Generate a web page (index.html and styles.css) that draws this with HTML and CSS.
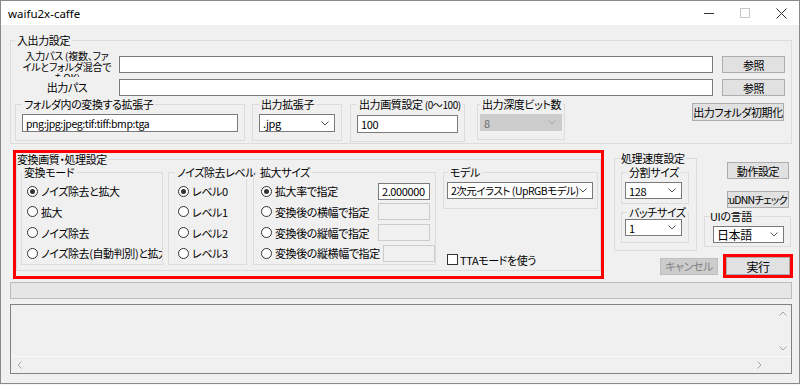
FILE: index.html
```html
<!DOCTYPE html>
<html lang="ja">
<head>
    <meta charset="UTF-8">
    <title>waifu2x-caffe</title>
    <link rel="stylesheet" href="styles.css">
</head>
<body>
<div class="window">

    <!-- タイトルバー -->
    <div class="titlebar">
        <span class="title">waifu2x-caffe</span>
        <div class="caption-btns">
            <div class="cap-btn"><svg width="10" height="10" viewBox="0 0 10 10"><line x1="0" y1="5.5" x2="10" y2="5.5" stroke="#333" stroke-width="1"/></svg></div>
            <div class="cap-btn"><svg width="10" height="10" viewBox="0 0 10 10"><rect x="0.5" y="0.5" width="9" height="9" fill="none" stroke="#c8c8c8" stroke-width="1"/></svg></div>
            <div class="cap-btn"><svg width="11" height="11" viewBox="0 0 11 11"><path d="M0.5 0.5 L10.5 10.5 M10.5 0.5 L0.5 10.5" stroke="#333" stroke-width="1"/></svg></div>
        </div>
    </div>

    <div class="client">

        <!-- 入出力設定 -->
        <fieldset class="group io">
            <legend>入出力設定</legend>
            <div class="path-row first">
                <div class="path-label multi">入力パス (複数、ファ<br>イルとフォルダ混合で<br>もOK)</div>
                <div class="edit path-edit"></div>
                <div class="btn ref-btn">参照</div>
            </div>
            <div class="path-row second">
                <div class="path-label">出力パス</div>
                <div class="edit path-edit"></div>
                <div class="btn ref-btn">参照</div>
            </div>
            <div class="opt-row">
                <fieldset class="group sub ext-group">
                    <legend>フォルダ内の変換する拡張子</legend>
                    <div class="edit ext-edit">png:jpg:jpeg:tif:tiff:bmp:tga</div>
                </fieldset>
                <fieldset class="group sub outext-group">
                    <legend>出力拡張子</legend>
                    <div class="combo outext-combo"><span>.jpg</span><svg width="8" height="5" viewBox="0 0 8 5"><polyline points="0.5,0.5 4,4 7.5,0.5" fill="none" stroke="#555"/></svg></div>
                </fieldset>
                <fieldset class="group sub quality-group">
                    <legend>出力画質設定 <small>(0〜100)</small></legend>
                    <div class="edit quality-edit">100</div>
                </fieldset>
                <fieldset class="group sub depth-group">
                    <legend>出力深度ビット数</legend>
                    <div class="combo disabled depth-combo"><span>8</span><svg width="8" height="5" viewBox="0 0 8 5"><polyline points="0.5,0.5 4,4 7.5,0.5" fill="none" stroke="#a0a0a0"/></svg></div>
                </fieldset>
                <div class="btn reset-btn">出力フォルダ初期化</div>
            </div>
        </fieldset>

        <div class="middle">

            <!-- 変換画質・処理設定 -->
            <div class="mark conv-mark">
                <fieldset class="group conv">
                    <legend>変換画質・処理設定</legend>
                    <div class="conv-row">
                        <fieldset class="group mode-group">
                            <legend>変換モード</legend>
                            <div class="opt"><span class="radio on"></span><span>ノイズ除去と拡大</span></div>
                            <div class="opt"><span class="radio"></span><span>拡大</span></div>
                            <div class="opt"><span class="radio"></span><span>ノイズ除去</span></div>
                            <div class="opt"><span class="radio"></span><span>ノイズ除去(自動判別)と拡大</span></div>
                        </fieldset>
                        <fieldset class="group noise-group">
                            <legend>ノイズ除去レベル</legend>
                            <div class="opt"><span class="radio on"></span><span>レベル0</span></div>
                            <div class="opt"><span class="radio"></span><span>レベル1</span></div>
                            <div class="opt"><span class="radio"></span><span>レベル2</span></div>
                            <div class="opt"><span class="radio"></span><span>レベル3</span></div>
                        </fieldset>
                        <fieldset class="group scale-group">
                            <legend>拡大サイズ</legend>
                            <div class="opt"><span class="radio on"></span><span class="opt-text">拡大率で指定</span><div class="edit scale-edit">2.000000</div></div>
                            <div class="opt"><span class="radio"></span><span class="opt-text">変換後の横幅で指定</span><div class="edit disabled scale-edit"></div></div>
                            <div class="opt"><span class="radio"></span><span class="opt-text">変換後の縦幅で指定</span><div class="edit disabled scale-edit"></div></div>
                            <div class="opt"><span class="radio"></span><span class="opt-text">変換後の縦横幅で指定</span><div class="edit disabled scale-edit"></div></div>
                        </fieldset>
                        <div class="model-col">
                            <fieldset class="group model-group">
                                <legend>モデル</legend>
                                <div class="combo model-combo"><span>2次元イラスト (UpRGBモデル)</span><svg width="8" height="5" viewBox="0 0 8 5"><polyline points="0.5,0.5 4,4 7.5,0.5" fill="none" stroke="#555"/></svg></div>
                            </fieldset>
                            <div class="tta"><span class="check"></span><span>TTAモードを使う</span></div>
                        </div>
                    </div>
                </fieldset>
            </div>

            <!-- 処理速度設定・実行 -->
            <div class="side">
                <div class="side-top">
                    <fieldset class="group speed-group">
                        <legend>処理速度設定</legend>
                        <fieldset class="group sub2 split-group">
                            <legend>分割サイズ</legend>
                            <div class="combo speed-combo"><span>128</span><svg width="8" height="5" viewBox="0 0 8 5"><polyline points="0.5,0.5 4,4 7.5,0.5" fill="none" stroke="#555"/></svg></div>
                        </fieldset>
                        <fieldset class="group sub2 batch-group">
                            <legend>バッチサイズ</legend>
                            <div class="combo speed-combo"><span>1</span><svg width="8" height="5" viewBox="0 0 8 5"><polyline points="0.5,0.5 4,4 7.5,0.5" fill="none" stroke="#555"/></svg></div>
                        </fieldset>
                    </fieldset>
                    <div class="side-right">
                        <div class="btn side-btn first">動作設定</div>
                        <div class="btn side-btn cudnn-btn">cuDNNチェック</div>
                        <fieldset class="group lang-group">
                            <legend>UIの言語</legend>
                            <div class="combo lang-combo"><span>日本語</span><svg width="8" height="5" viewBox="0 0 8 5"><polyline points="0.5,0.5 4,4 7.5,0.5" fill="none" stroke="#555"/></svg></div>
                        </fieldset>
                    </div>
                </div>
                <div class="run-row">
                    <div class="btn disabled cancel-btn">キャンセル</div>
                    <div class="mark run-mark"><div class="btn run-btn">実行</div></div>
                </div>
            </div>
        </div>

        <!-- 進捗・ログ -->
        <div class="progress"></div>
        <div class="log">
            <div class="log-main">
                <div class="log-text"></div>
                <div class="vscroll">
                    <svg width="8" height="5" viewBox="0 0 8 5"><polyline points="0.5,4.5 4,1 7.5,4.5" fill="none" stroke="#a6a6a6"/></svg>
                    <svg width="8" height="5" viewBox="0 0 8 5"><polyline points="0.5,0.5 4,4 7.5,0.5" fill="none" stroke="#a6a6a6"/></svg>
                </div>
            </div>
            <div class="hscroll">
                <div class="hbar">
                    <svg width="5" height="8" viewBox="0 0 5 8"><polyline points="4.5,0.5 1,4 4.5,7.5" fill="none" stroke="#a6a6a6"/></svg>
                    <svg width="5" height="8" viewBox="0 0 5 8"><polyline points="0.5,0.5 4,4 0.5,7.5" fill="none" stroke="#a6a6a6"/></svg>
                </div>
                <div class="corner"></div>
            </div>
        </div>
    </div>
</div>
</body>
</html>
```

FILE: styles.css
```css
* {
    box-sizing: border-box;
}

body {
    margin: 0;
    background-color: #f4f4f4;
    font-family: "Noto Sans CJK JP", sans-serif;
    font-size: 11px;
    font-feature-settings: "palt";
    letter-spacing: -0.4px;
    color: #000;
}

.window {
    width: 800px;
    height: 384px;
    border: 1px solid #8a8a8a;
    background-color: #f0f0f0;
    overflow: hidden;
}

/* タイトルバー */
.titlebar {
    height: 24px;
    background-color: #fff;
    display: flex;
    align-items: center;
    padding-left: 7px;
}

.title {
    font-family: "Noto Sans", sans-serif;
    font-size: 11.5px;
    letter-spacing: 0;
}

.caption-btns {
    margin-left: auto;
    display: flex;
}

.cap-btn {
    width: 36px;
    height: 24px;
    display: flex;
    align-items: center;
    justify-content: center;
}

.client {
    padding: 0 7px 0 9px;
}

/* グループボックス */
.group {
    margin: 0;
    min-width: 0;
    border: 1px solid #dcdcdc;
    padding: 0;
}

.group legend {
    padding: 0 2px;
    line-height: 13px;
    white-space: nowrap;
}

.edit {
    border: 1px solid #7a7a7a;
    background-color: #fff;
    padding-left: 3px;
    display: flex;
    align-items: center;
    white-space: nowrap;
    overflow: hidden;
}

.edit.disabled {
    border-color: #cccccc;
    background-color: #f0f0f0;
}

.combo {
    border: 1px solid #7a7a7a;
    background-color: #fff;
    padding: 0 5px 0 3px;
    display: flex;
    align-items: center;
    white-space: nowrap;
    overflow: hidden;
}

.combo span {
    flex: 1;
    overflow: hidden;
}

.combo svg {
    flex: none;
}

.combo.disabled {
    border-color: #cccccc;
    background-color: #cccccc;
    color: #6d6d6d;
}

.btn {
    border: 1px solid #adadad;
    background-color: #e1e1e1;
    display: flex;
    align-items: center;
    justify-content: center;
    white-space: nowrap;
    overflow: hidden;
}

.btn.disabled {
    border-color: #bfbfbf;
    background-color: #cccccc;
    color: #838383;
}

.mark {
    border: 3px solid #ff0000;
}

/* 入出力設定 */
.io {
    margin-top: 8px;
    padding: 3px 0 1px 4px;
}

.io > legend {
    line-height: 14px;
}

.path-row {
    display: flex;
    align-items: flex-start;
    padding-left: 3px;
}

.path-row.first {
    height: 24px;
}

.path-row.second {
    margin-top: 5px;
    height: 17px;
}

.path-label {
    width: 98px;
    text-align: center;
    line-height: 17px;
    white-space: nowrap;
}

.path-label.multi {
    height: 27px;
    font-size: 10px;
    line-height: 11px;
    overflow: hidden;
    letter-spacing: -0.2px;
}

.path-edit {
    margin-left: 3px;
    width: 594px;
    height: 17px;
}

.first .path-edit, .first .ref-btn {
    margin-top: 6px;
}

.ref-btn {
    margin-left: 9px;
    width: 63px;
    height: 17px;
}

.opt-row {
    display: flex;
    align-items: flex-start;
    margin-top: 1px;
}

.sub {
    padding: 3px 6px 8px 6px;
}

.sub legend {
    line-height: 14px;
}

.sub legend small {
    font-size: 10px;
}

.ext-group {
    width: 230px;
}

.ext-edit {
    height: 18px;
    font-size: 10.5px;
}

.outext-group {
    width: 90px;
    margin-left: 7px;
}

.outext-combo {
    height: 18px;
}

.quality-group {
    width: 115px;
    margin-left: 8px;
}

.quality-edit {
    height: 18px;
}

.depth-group {
    width: 88px;
    margin-left: 12px;
    padding-left: 2px;
    padding-right: 2px;
}

.depth-combo {
    height: 17px;
}

.reset-btn {
    margin-left: auto;
    margin-right: 7px;
    margin-top: 6px;
    width: 92px;
    height: 18px;
}

/* 変換画質・処理設定 */
.middle {
    display: flex;
    align-items: flex-start;
    margin-top: 6px;
}

.conv-mark {
    margin-left: 3px;
    width: 591px;
    padding-bottom: 5px;
}

.conv {
    padding-bottom: 5px;
}

.conv > legend {
    padding: 0 1px 0 0;
}

.conv-row {
    display: flex;
    align-items: flex-start;
    padding-left: 4px;
}

.opt {
    height: 20.67px;
    display: flex;
    align-items: center;
    gap: 3px;
    white-space: nowrap;
    overflow: hidden;
}

.radio {
    flex: none;
    width: 11px;
    height: 11px;
    border: 1px solid #333;
    border-radius: 50%;
    background-color: #fff;
    display: flex;
    align-items: center;
    justify-content: center;
}

.radio.on::after {
    content: "";
    width: 5px;
    height: 5px;
    border-radius: 50%;
    background-color: #333;
}

.mode-group {
    width: 142px;
    padding-top: 2px;
}

.mode-group .opt {
    padding-left: 5px;
}

.noise-group {
    width: 79px;
    margin-left: 5px;
    padding-top: 2px;
    padding-left: 6px;
}

.noise-group .opt {
    padding-left: 3px;
}

.scale-group {
    width: 183px;
    margin-left: 6px;
    padding-top: 2px;
    padding-left: 4px;
}

.scale-group .opt {
    padding-left: 3px;
}

.opt-text {
    flex: 1;
}

.scale-edit {
    flex: none;
    width: 52px;
    height: 17px;
    margin-right: 5px;
}

.model-col {
    width: 155px;
    margin-left: 7px;
}

.model-group {
    padding: 3px 0 9px 3px;
}

.model-group legend {
    margin-left: 1px;
}

.model-combo {
    width: 146px;
    height: 17px;
    font-size: 10.5px;
    letter-spacing: -0.5px;
}

.tta {
    margin-top: 45px;
    height: 11px;
    display: flex;
    align-items: center;
    gap: 2px;
    padding-left: 4px;
}

.check {
    flex: none;
    width: 11px;
    height: 11px;
    border: 1px solid #333;
    background-color: #fff;
}

/* 処理速度設定 */
.side {
    margin-left: 10px;
    width: 178px;
}

.side-top {
    display: flex;
    align-items: flex-start;
}

.speed-group {
    width: 83px;
    margin-top: 2px;
    padding: 0 0 7px 6px;
}

.speed-group > legend {
    padding: 0;
}

.sub2 {
    width: 68px;
    padding: 3px 0 4px 3px;
}

.sub2 legend {
    margin-left: 2px;
}

.split-group {
    margin-top: 1px;
}

.batch-group {
    margin-top: 2px;
    padding-top: 0;
    padding-bottom: 6px;
}

.speed-combo {
    width: 57px;
    height: 17px;
}

.side-right {
    margin-left: 7px;
    width: 88px;
}

.side-btn {
    margin-left: 23px;
    margin-top: 12px;
    width: 62px;
    height: 17px;
}

.cudnn-btn {
    justify-content: flex-end;
    padding-right: 1px;
    font-size: 10.5px;
    letter-spacing: -0.8px;
}

.lang-group {
    margin-top: 2px;
    width: 87px;
    padding: 3px 0 3px 5px;
}

.lang-group legend {
    padding: 0 2px 0 0;
}

.lang-combo {
    margin-left: 3px;
    width: 71px;
    height: 17px;
    font-size: 12px;
}

.run-row {
    display: flex;
    justify-content: flex-end;
    align-items: center;
    margin-top: 3px;
    margin-right: -1px;
}

.cancel-btn {
    width: 58px;
    height: 17px;
    margin-right: 5px;
}

.run-btn {
    width: 64px;
    height: 18px;
    font-size: 12px;
}

/* 進捗・ログ */
.progress {
    margin-top: 3px;
    height: 17px;
    border: 1px solid #bcbcbc;
    background-color: #e6e6e6;
}

.log {
    margin-top: 5px;
    height: 70px;
    border: 1px solid #828282;
    background-color: #f0f0f0;
    display: flex;
    flex-direction: column;
}

.log-main {
    flex: 1;
    display: flex;
}

.log-text {
    flex: 1;
}

.vscroll {
    width: 17px;
    display: flex;
    flex-direction: column;
    align-items: center;
    justify-content: space-between;
    padding: 6px 0 5px;
}

.hscroll {
    height: 17px;
    display: flex;
    border-top: 1px solid #fafafa;
}

.hbar {
    flex: 1;
    display: flex;
    align-items: center;
    justify-content: space-between;
    padding: 0 12px 0 6px;
}

.corner {
    width: 17px;
}
```
